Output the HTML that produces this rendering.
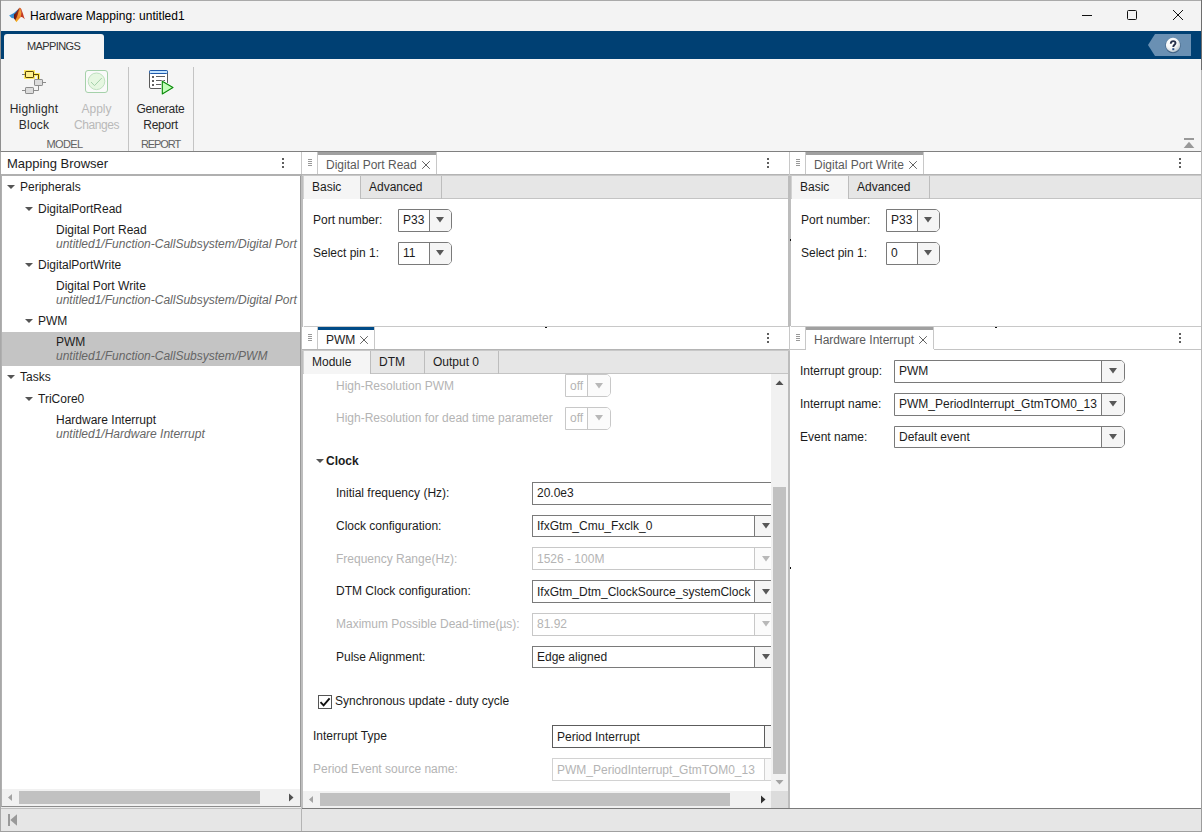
<!DOCTYPE html>
<html><head><meta charset="utf-8"><title>Hardware Mapping: untitled1</title>
<style>
*{box-sizing:border-box;margin:0;padding:0}
html,body{width:1202px;height:832px;overflow:hidden}
body{position:relative;background:#f5f5f5;font-family:"Liberation Sans",sans-serif;font-size:12px;color:#1c1c1c}
.a{position:absolute}
.t{position:absolute;white-space:nowrap;line-height:14px;font-size:12px}
.i{font-style:italic;color:#666}
.dis{color:#b4b4b4}
.ar{position:absolute;width:0;height:0;border-left:4px solid transparent;border-right:4px solid transparent;border-top:4px solid #555}
.dd{position:absolute;background:#fff;border:1px solid #7a7a7a;border-radius:0 5px 5px 0}
.dd .b{position:absolute;top:0;bottom:0;right:0;width:22px;border-left:1px solid #7a7a7a;background:#f5f5f5;border-radius:0 4px 4px 0}
.dd .b:after{content:"";position:absolute;left:6px;top:7px;width:8px;height:6px;background:#585858;clip-path:polygon(0 0,100% 0,50% 92%)}
.dd.w .b{width:23px}
.dd.w .b:after{left:7px}
.dd .v{position:absolute;left:4px;top:3px;line-height:14px;white-space:nowrap}
.dd.d{border-color:#c8c8c8}
.dd.d .b{border-color:#c8c8c8;background:#fbfbfb}
.dd .b.f1:after{top:8px}
.dd.d .b:after{background:#b8b8b8}
.dd.d .v{color:#b4b4b4}
.grip{position:absolute;width:4px;height:7px;background:linear-gradient(#999 0 1px,transparent 1px 2px,#999 2px 3px,transparent 3px 4px,#999 4px 5px,transparent 5px 6px,#999 6px 7px)}
.kebab{position:absolute;width:2px;height:10px;background:linear-gradient(#5e5e5e 0 2px,transparent 2px 4px,#5e5e5e 4px 6px,transparent 6px 8px,#5e5e5e 8px 10px)}
.tab{position:absolute;height:22px;padding-top:3px;background:linear-gradient(#a0a0a0 0 3px,#fff 3px);border-left:1px solid #c8c8c8;border-right:1px solid #c8c8c8}
.tab.on{background:linear-gradient(#004b87 0 3px,#fff 3px)}
.tab.on span{color:#222}
.tab span{position:absolute;left:8px;top:6px;line-height:14px;white-space:nowrap;color:#5a5a5a}
.tab svg{position:absolute;right:6px;top:9px}
.sub{position:absolute;height:23px;background:#e6e6e6;border-bottom:1px solid #c4c4c4}
.st{position:absolute;top:0;height:23px;border-right:1px solid #bdbdbd;line-height:14px;padding:4px 0 0 8px;white-space:nowrap}
.st.on{background:#f5f5f5;height:23px}
</style></head><body>

<!-- window frame -->
<div class="a" style="left:0;top:0;width:1202px;height:1px;background:#a9a9a9"></div>
<div class="a" style="left:0;top:0;width:1px;height:832px;background:linear-gradient(#8f8f8f 0 152px,#a8a8a8 152px)"></div>
<div class="a" style="left:1201px;top:0;width:1px;height:832px;background:linear-gradient(#6e6e6e 0 70px,#b8b8b8 70px 420px,#9c9c9c 420px)"></div>
<div class="a" style="left:0;top:831px;width:1202px;height:1px;background:#a0a0a0"></div>

<!-- title bar -->
<div class="a" style="left:1px;top:1px;width:1200px;height:30px;background:#f3f3f3"></div>
<div class="t" style="left:30px;top:9px;color:#000;letter-spacing:.05px">Hardware Mapping: untitled1</div>

<!-- blue band -->
<div class="a" style="left:1px;top:31px;width:1200px;height:28px;background:#004073"></div>
<div class="a" style="left:4px;top:34px;width:100px;height:25px;background:#f5f5f5;border-radius:3px 3px 0 0"></div>
<div class="t" style="left:27px;top:39px;font-size:11px;letter-spacing:-0.6px;color:#333">MAPPINGS</div>

<!-- toolstrip -->
<div class="a" style="left:1px;top:59px;width:1200px;height:92px;background:#f5f5f5"></div>
<div class="a" style="left:128px;top:67px;width:1px;height:84px;background:#c4c4c4"></div>
<div class="a" style="left:193px;top:67px;width:1px;height:84px;background:#c4c4c4"></div>
<div class="a" style="left:1px;top:151px;width:1200px;height:1px;background:#808080"></div>


<!-- toolstrip icons -->
<svg class="a" style="left:16px;top:64px" width="40" height="36" viewBox="16 64 40 36">
<rect x="24" y="70" width="11" height="9" fill="#ffec66"/>
<path d="M34 74.5H38.5V79" stroke="#ffec66" stroke-width="3" fill="none"/>
<path d="M22 74.5H25" stroke="#777" fill="none"/>
<rect x="25.5" y="71.5" width="8" height="6" rx=".6" fill="#fff08c" stroke="#5a4300"/>
<path d="M34 74.5H38.5V79" stroke="#5a4300" fill="none"/>
<path d="M43 82.5H46M22 90.5H25M34 90.5H38.5V86" stroke="#8c8c8c" fill="none"/>
<rect x="34.5" y="79.5" width="8" height="6" rx=".6" fill="#dcdcdc" stroke="#8c8c8c"/>
<rect x="25.5" y="87.5" width="8" height="6" rx=".6" fill="#dcdcdc" stroke="#8c8c8c"/>
</svg>
<svg class="a" style="left:78px;top:64px" width="40" height="36" viewBox="78 64 40 36">
<rect x="85.5" y="70.5" width="22" height="22" rx="2.5" fill="#fafafa" stroke="#a5d1aa"/>
<circle cx="96.5" cy="81.3" r="8.3" fill="#e6f7e1" stroke="#bfe0c0"/>
<path d="M91 82L94.5 85.6L101.8 78" stroke="#a5d1aa" fill="none"/>
</svg>
<svg class="a" style="left:142px;top:64px" width="40" height="36" viewBox="142 64 40 36">
<rect x="149.5" y="70.5" width="18" height="18" rx="1.5" fill="#fff" stroke="#5a5a5a"/>
<rect x="149.5" y="70.5" width="18" height="3" rx="1" fill="#c3e4ff" stroke="#1f5aab"/>
<path d="M152 77h2M152 81h2M152 85h2" stroke="#606060" stroke-width="2" fill="none"/>
<path d="M156 76.5h9M156 80.5h9M156 84.5h6" stroke="#606060" fill="none"/>
<path d="M162.3 81.3V93.9L173 87.5Z" fill="#c3ffb9" stroke="#fff" stroke-width="2.2" stroke-linejoin="round"/>
<path d="M162.3 81.3V93.9L173 87.5Z" fill="#c3ffb9" stroke="#0a8a0a" stroke-width="1.15" stroke-linejoin="round"/>
</svg>
<!-- toolstrip labels -->
<div class="t" style="left:4px;width:60px;top:101px;line-height:16px;text-align:center;letter-spacing:.2px;color:#2a2a2a">Highlight<br>Block</div>
<div class="t dis" style="left:66px;width:61px;top:101px;line-height:16px;text-align:center;color:#b9b9b9">Apply<br><span style="letter-spacing:-.4px">Changes</span></div>
<div class="t" style="left:130px;width:61px;top:101px;line-height:16px;text-align:center;letter-spacing:-.25px;color:#2a2a2a">Generate<br>Report</div>
<div class="t" style="left:34px;width:61px;top:137px;text-align:center;font-size:11px;letter-spacing:-.6px;color:#626262">MODEL</div>
<div class="t" style="left:130px;width:61px;top:137px;text-align:center;font-size:11px;letter-spacing:-1.1px;color:#626262">REPORT</div>
<!-- collapse icon -->
<svg class="a" style="left:1182px;top:136px" width="14" height="14" viewBox="1182 136 14 14"><path d="M1184 139h10" stroke="#999" stroke-width="2" fill="none"/><path d="M1189 141.8L1194.3 148H1183.7Z" fill="#999"/></svg>


<!-- matlab logo -->
<svg class="a" style="left:8px;top:6px" width="18" height="18" viewBox="8 6 18 18">
<defs>
<linearGradient id="mb" x1="0" y1="1" x2="1" y2="0"><stop offset="0" stop-color="#3d9be0"/><stop offset=".55" stop-color="#2a7fc4"/><stop offset="1" stop-color="#174a86"/></linearGradient>
<linearGradient id="md" x1="0" y1="0" x2="1" y2="0"><stop offset="0" stop-color="#5e1410"/><stop offset="1" stop-color="#b83a1c"/></linearGradient>
<linearGradient id="mo" x1="0" y1="0" x2="0" y2="1"><stop offset="0" stop-color="#d8551f"/><stop offset=".3" stop-color="#f0a038"/><stop offset=".7" stop-color="#ee8428"/><stop offset="1" stop-color="#f7be1e"/></linearGradient>
</defs>
<path d="M9.1 15.6L14 13L18.2 9.3L19.6 7.8L17 14L14.6 18.6L11.6 18Z" fill="url(#mb)"/>
<path d="M14 14.6C16 13 18 9.8 19.4 7.7L20.2 12L17.5 18L15.6 20.8L14 18.4Z" fill="url(#md)"/>
<path d="M19.4 7.7L20.7 8C21.2 10 21.6 12 21.8 14L20.6 17.2C19 18.6 17.8 20.8 16.4 22.2L15.2 20.3C17 18 18.6 12.5 19.4 7.7Z" fill="url(#mo)"/>
<path d="M20.7 8C21.6 9.5 22.3 11.6 23 13.8C23.6 15.8 24.2 17.8 24.9 19.2C23.6 18.4 22.6 17.2 21.6 17C21.2 16.9 20.9 17 20.6 17.2C21.6 14.5 21.4 11 20.7 8Z" fill="#c3371f"/>
</svg>
<!-- window controls -->
<svg class="a" style="left:1076px;top:5px" width="120" height="22" viewBox="1076 5 120 22">
<path d="M1082 15.5h10" stroke="#111" fill="none"/>
<rect x="1127.5" y="10.5" width="9" height="9" rx="1" fill="none" stroke="#111"/>
<path d="M1173 10l10 10M1183 10l-10 10" stroke="#111" fill="none"/>
</svg>
<!-- help -->
<svg class="a" style="left:1146px;top:33px" width="48" height="25" viewBox="1146 33 48 25">
<defs><radialGradient id="hg" cx=".38" cy=".3" r=".75"><stop offset="0" stop-color="#fff"/><stop offset=".55" stop-color="#f4f6f7"/><stop offset=".85" stop-color="#cdd5db"/><stop offset="1" stop-color="#9fb0bd"/></radialGradient></defs>
<path d="M1148 45L1155 34H1191V56H1155Z" fill="#6a90b3"/>
<circle cx="1173" cy="45.6" r="7.7" fill="#1d3c5e" opacity=".55"/>
<circle cx="1173" cy="45" r="7.2" fill="url(#hg)"/>
<path d="M1170.8 43.7C1170.7 41.9 1171.9 41.1 1173.2 41.1C1174.7 41.1 1175.5 42 1175.5 43.1C1175.5 44.8 1173.3 44.9 1173.3 46.9" stroke="#252f4a" stroke-width="1.9" fill="none"/><rect x="1172.3" y="48.2" width="2" height="2" fill="#2a4f86"/>
</svg>


<!-- left panel -->
<div class="a" style="left:1px;top:152px;width:300px;height:22px;background:#fff"></div>
<div class="t" style="left:7px;top:156px;font-size:13px;line-height:15px">Mapping Browser</div>
<div class="kebab" style="left:282px;top:158px"></div>
<div class="a" style="left:301px;top:152px;width:1px;height:22px;background:#c8c8c8"></div>
<div class="a" style="left:1px;top:174px;width:301px;height:2px;background:#b0b0b0"></div>
<div class="a" style="left:1px;top:176px;width:300px;height:631px;background:#fff;border-left:1px solid #b0b0b0;border-right:1px solid #999;border-bottom:1px solid #8c8c8c;overflow:hidden">
<div class="a" style="left:0;top:156px;width:298px;height:34px;background:#c4c4c4"></div>
</div>
<div class="a" style="left:0;top:0;width:300px;height:789px;overflow:hidden">
<div class="ar" style="left:7px;top:185px"></div>
<div class="t " style="left:20px;top:180px">Peripherals</div>
<div class="ar" style="left:25px;top:207px"></div>
<div class="t " style="left:38px;top:202px">DigitalPortRead</div>
<div class="t " style="left:56px;top:223px">Digital Port Read</div>
<div class="t i" style="left:56px;top:237px">untitled1/Function-CallSubsystem/Digital Port</div>
<div class="ar" style="left:25px;top:263px"></div>
<div class="t " style="left:38px;top:258px">DigitalPortWrite</div>
<div class="t " style="left:56px;top:279px">Digital Port Write</div>
<div class="t i" style="left:56px;top:293px">untitled1/Function-CallSubsystem/Digital Port</div>
<div class="ar" style="left:25px;top:319px"></div>
<div class="t " style="left:38px;top:314px">PWM</div>
<div class="t " style="left:56px;top:335px">PWM</div>
<div class="t i" style="left:56px;top:349px">untitled1/Function-CallSubsystem/PWM</div>
<div class="ar" style="left:7px;top:375px"></div>
<div class="t " style="left:20px;top:370px">Tasks</div>
<div class="ar" style="left:25px;top:397px"></div>
<div class="t " style="left:38px;top:392px">TriCore0</div>
<div class="t " style="left:56px;top:413px">Hardware Interrupt</div>
<div class="t i" style="left:56px;top:427px">untitled1/Hardware Interrupt</div>
</div>
<!-- left scrollbar -->
<div class="a" style="left:2px;top:789px;width:298px;height:17px;background:#f1f1f1"></div>
<div class="a" style="left:19px;top:791px;width:241px;height:13px;background:#c1c1c1"></div>
<svg class="a" style="left:2px;top:789px" width="298" height="17" viewBox="2 789 298 17"><path d="M8 797.5L12 794V801Z" fill="#a3a3a3"/><path d="M293.5 797.5L289 793.5V801.5Z" fill="#505050"/></svg>


<!-- panels -->
<div class="a" style="left:301px;top:176px;width:2px;height:632px;background:#bebebe"></div>
<div class="a" style="left:788px;top:176px;width:2px;height:632px;background:#bcbcbc"></div><div class="a" style="left:790px;top:176px;width:1px;height:150px;background:#bebebe"></div>
<div class="a" style="left:789px;top:152px;width:1px;height:24px;background:#c8c8c8"></div>
<div class="a" style="left:789px;top:327px;width:1px;height:24px;background:#c8c8c8"></div>
<div class="a" style="left:303px;top:176px;width:485px;height:150px;background:#fff"></div>
<div class="a" style="left:302px;top:152px;width:487px;height:22px;background:#fff"></div>
<div class="grip" style="left:308px;top:159px"></div>
<div class="tab" style="left:317px;top:152px;width:120px"><span>Digital Port Read</span><svg width="8" height="8" viewBox="0 0 8 8"><path d="M.2 .2L7.8 7.8M7.8 .2L.2 7.8" stroke="#505050" stroke-width=".9" fill="none"/></svg></div>
<div class="a" style="left:302px;top:174px;width:487px;height:2px;background:linear-gradient(#b4b4b4 0 1px,#c8c8c8 1px 2px)"></div>
<div class="kebab" style="left:767px;top:158px"></div>
<div class="sub" style="left:303px;top:176px;width:485px;border-left:1px solid #d2d2d2"><div class="st on" style="left:0;width:57px">Basic</div><div class="st" style="left:57px;width:81px">Advanced</div></div>
<div class="t " style="left:313px;top:213px">Port number:</div>
<div class="dd" style="left:398px;top:209px;width:54px;height:23px"><div class="v">P33</div><div class="b"></div></div>
<div class="t " style="left:313px;top:246px">Select pin 1:</div>
<div class="dd" style="left:398px;top:242px;width:54px;height:23px"><div class="v">11</div><div class="b"></div></div>
<div class="a" style="left:791px;top:176px;width:410px;height:150px;background:#fff"></div>
<div class="a" style="left:790px;top:152px;width:411px;height:22px;background:#fff"></div>
<div class="grip" style="left:796px;top:159px"></div>
<div class="tab" style="left:805px;top:152px;width:119px"><span>Digital Port Write</span><svg width="8" height="8" viewBox="0 0 8 8"><path d="M.2 .2L7.8 7.8M7.8 .2L.2 7.8" stroke="#505050" stroke-width=".9" fill="none"/></svg></div>
<div class="a" style="left:790px;top:174px;width:411px;height:2px;background:linear-gradient(#b4b4b4 0 1px,#c8c8c8 1px 2px)"></div>
<div class="kebab" style="left:1179px;top:158px"></div>
<div class="sub" style="left:791px;top:176px;width:410px;border-left:1px solid #d2d2d2"><div class="st on" style="left:0;width:57px">Basic</div><div class="st" style="left:57px;width:81px">Advanced</div></div>
<div class="t " style="left:801px;top:213px">Port number:</div>
<div class="dd" style="left:886px;top:209px;width:54px;height:23px"><div class="v">P33</div><div class="b"></div></div>
<div class="t " style="left:801px;top:246px">Select pin 1:</div>
<div class="dd" style="left:886px;top:242px;width:54px;height:23px"><div class="v">0</div><div class="b"></div></div>
<div class="a" style="left:790px;top:349px;width:411px;height:459px;background:#fff"></div>
<div class="a" style="left:791px;top:326px;width:410px;height:1px;background:#c8c8c8"></div>
<div class="a" style="left:790px;top:327px;width:411px;height:22px;background:#fff"></div>
<div class="grip" style="left:796px;top:334px"></div>
<div class="tab" style="left:805px;top:327px;width:129px"><span>Hardware Interrupt</span><svg width="8" height="8" viewBox="0 0 8 8"><path d="M.2 .2L7.8 7.8M7.8 .2L.2 7.8" stroke="#505050" stroke-width=".9" fill="none"/></svg></div>
<div class="a" style="left:790px;top:349px;width:16px;height:1px;background:#c4c4c4"></div><div class="a" style="left:934px;top:349px;width:267px;height:1px;background:#c4c4c4"></div>
<div class="kebab" style="left:1179px;top:333px"></div>
<div class="t " style="left:800px;top:364px">Interrupt group:</div>
<div class="dd w" style="left:894px;top:360px;width:231px;height:23px"><div class="v">PWM</div><div class="b"></div></div>
<div class="t " style="left:800px;top:397px">Interrupt name:</div>
<div class="dd w" style="left:894px;top:393px;width:231px;height:23px"><div class="v">PWM_PeriodInterrupt_GtmTOM0_13</div><div class="b"></div></div>
<div class="t " style="left:800px;top:430px">Event name:</div>
<div class="dd w" style="left:894px;top:426px;width:231px;height:22px"><div class="v">Default event</div><div class="b"></div></div>


<!-- pwm panel -->
<div class="a" style="left:304px;top:326px;width:484px;height:1px;background:#c8c8c8"></div>
<div class="a" style="left:302px;top:327px;width:487px;height:22px;background:#fff"></div>
<div class="grip" style="left:308px;top:334px"></div>
<div class="tab on" style="left:317px;top:327px;width:58px"><span>PWM</span><svg width="8" height="8" viewBox="0 0 8 8"><path d="M.2 .2L7.8 7.8M7.8 .2L.2 7.8" stroke="#505050" stroke-width=".9" fill="none"/></svg></div>
<div class="a" style="left:302px;top:349px;width:487px;height:2px;background:linear-gradient(#b4b4b4 0 1px,#c8c8c8 1px 2px)"></div>
<div class="kebab" style="left:767px;top:333px"></div>
<div class="a" style="left:303px;top:374px;width:468px;height:417px;background:#fff;overflow:hidden;padding-left:1px"><div class="a" style="left:1px;top:0;width:467px;height:417px"><div class="t dis" style="left:32px;top:5px">High-Resolution PWM</div>
<div class="dd d w" style="left:261px;top:0px;width:46px;height:23px;"><div class="v" style="top:4px">off</div><div class="b f1"></div></div>
<div class="t dis" style="left:32px;top:37px">High-Resolution for dead time parameter</div>
<div class="dd d w" style="left:261px;top:33px;width:46px;height:23px;"><div class="v">off</div><div class="b"></div></div>
<div class="ar" style="left:12px;top:85px;border-top-color:#555"></div>
<div class="t" style="left:22px;top:80px;font-weight:bold;font-size:12px">Clock</div>
<div class="t " style="left:32px;top:112px">Initial frequency (Hz):</div>
<div class="a" style="left:228px;top:108px;width:246px;height:23px;background:#fff;border:1px solid #7a7a7a"><div class="t" style="left:4px;top:3px">20.0e3</div></div>
<div class="t " style="left:32px;top:145px">Clock configuration:</div>
<div class="dd w" style="left:228px;top:141px;width:246px;height:22px;border-radius:0"><div class="v">IfxGtm_Cmu_Fxclk_0</div><div class="b"></div></div>
<div class="t dis" style="left:32px;top:178px">Frequency Range(Hz):</div>
<div class="dd d w" style="left:228px;top:173px;width:246px;height:23px;border-radius:0"><div class="v" style="top:4px">1526 - 100M</div><div class="b f1"></div></div>
<div class="t " style="left:32px;top:210px">DTM Clock configuration:</div>
<div class="dd w" style="left:228px;top:206px;width:246px;height:23px;border-radius:0"><div class="v" style="top:4px">IfxGtm_Dtm_ClockSource_systemClock</div><div class="b f1"></div></div>
<div class="t dis" style="left:32px;top:243px">Maximum Possible Dead-time(µs):</div>
<div class="dd d w" style="left:228px;top:239px;width:246px;height:23px;border-radius:0"><div class="v">81.92</div><div class="b"></div></div>
<div class="t " style="left:32px;top:276px">Pulse Alignment:</div>
<div class="dd w" style="left:228px;top:272px;width:246px;height:22px;border-radius:0"><div class="v">Edge aligned</div><div class="b"></div></div>
<div class="a" style="left:14px;top:321px;width:14px;height:14px;background:#fff;border:1px solid #555"><svg class="a" style="left:0;top:0" width="12" height="12" viewBox="0 0 12 12"><path d="M1.5 6.2L4.6 9.4L10.6 2.4" stroke="#111" stroke-width="1.9" fill="none"/></svg></div>
<div class="t " style="left:31px;top:320px">Synchronous update - duty cycle</div>
<div class="t " style="left:9px;top:355px">Interrupt Type</div>
<div class="a" style="left:248px;top:351px;width:236px;height:23px;background:#fff;border:1px solid #5c5c5c"><div class="t" style="left:4px;top:4px">Period Interrupt</div><div class="a" style="left:211px;top:0;width:30px;height:21px;border-left:1px solid #5c5c5c;background:#f5f5f5"></div></div>
<div class="t dis" style="left:9px;top:388px">Period Event source name:</div>
<div class="a" style="left:248px;top:384px;width:236px;height:23px;background:#fff;border:1px solid #d2d2d2"><div class="t dis" style="left:4px;top:4px">PWM_PeriodInterrupt_GtmTOM0_13</div><div class="a" style="left:211px;top:0;width:30px;height:21px;border-left:1px solid #d2d2d2;background:#f8f8f8"></div></div></div></div>
<div class="sub" style="left:303px;top:351px;width:485px;border-left:1px solid #d2d2d2"><div class="st on" style="left:0;width:67px">Module</div><div class="st" style="left:67px;width:54px">DTM</div><div class="st" style="left:121px;width:74px">Output 0</div></div>
<div class="a" style="left:771px;top:374px;width:17px;height:417px;background:#f1f1f1"></div>
<div class="a" style="left:773px;top:487px;width:13px;height:287px;background:#c1c1c1"></div>
<svg class="a" style="left:771px;top:374px" width="17" height="417" viewBox="771 374 17 417"><path d="M779.5 380.5L783.5 385H775.5Z" fill="#505050"/><path d="M779.5 784.5L783.5 780H775.5Z" fill="#a3a3a3"/></svg>
<div class="a" style="left:303px;top:791px;width:468px;height:17px;background:#f1f1f1"></div>
<div class="a" style="left:771px;top:791px;width:17px;height:17px;background:#dcdcdc"></div>
<div class="a" style="left:320px;top:793px;width:410px;height:13px;background:#c1c1c1"></div>
<svg class="a" style="left:304px;top:791px" width="467" height="17" viewBox="304 791 467 17"><path d="M309 799.5L313 796V803Z" fill="#a3a3a3"/><path d="M765.5 799.5L761 795.5V803.5Z" fill="#303030"/></svg>
<div class="a" style="left:1px;top:807px;width:300px;height:1px;background:#ececec"></div>
<div class="a" style="left:1px;top:808px;width:1200px;height:23px;background:#e6e6e6"></div>
<div class="a" style="left:1px;top:808px;width:301px;height:1px;background:#c0c0c0"></div>
<div class="a" style="left:302px;top:808px;width:899px;height:1px;background:#7a7a7a"></div>
<div class="a" style="left:301px;top:809px;width:1px;height:22px;background:#b4b4b4"></div>
<svg class="a" style="left:6px;top:812px" width="14" height="16" viewBox="6 812 14 16"><path d="M8 814h2v12h-2z" fill="#999"/><path d="M10.3 820L17 814.3V825.7Z" fill="#999"/></svg>

<div class="a" style="left:545px;top:327px;width:2px;height:1px;background:#111"></div><div class="a" style="left:995px;top:327px;width:2px;height:1px;background:#111"></div><div class="a" style="left:790px;top:567px;width:1px;height:2px;background:#111"></div><div class="a" style="left:790px;top:239px;width:1px;height:2px;background:#111"></div>
</body></html>
